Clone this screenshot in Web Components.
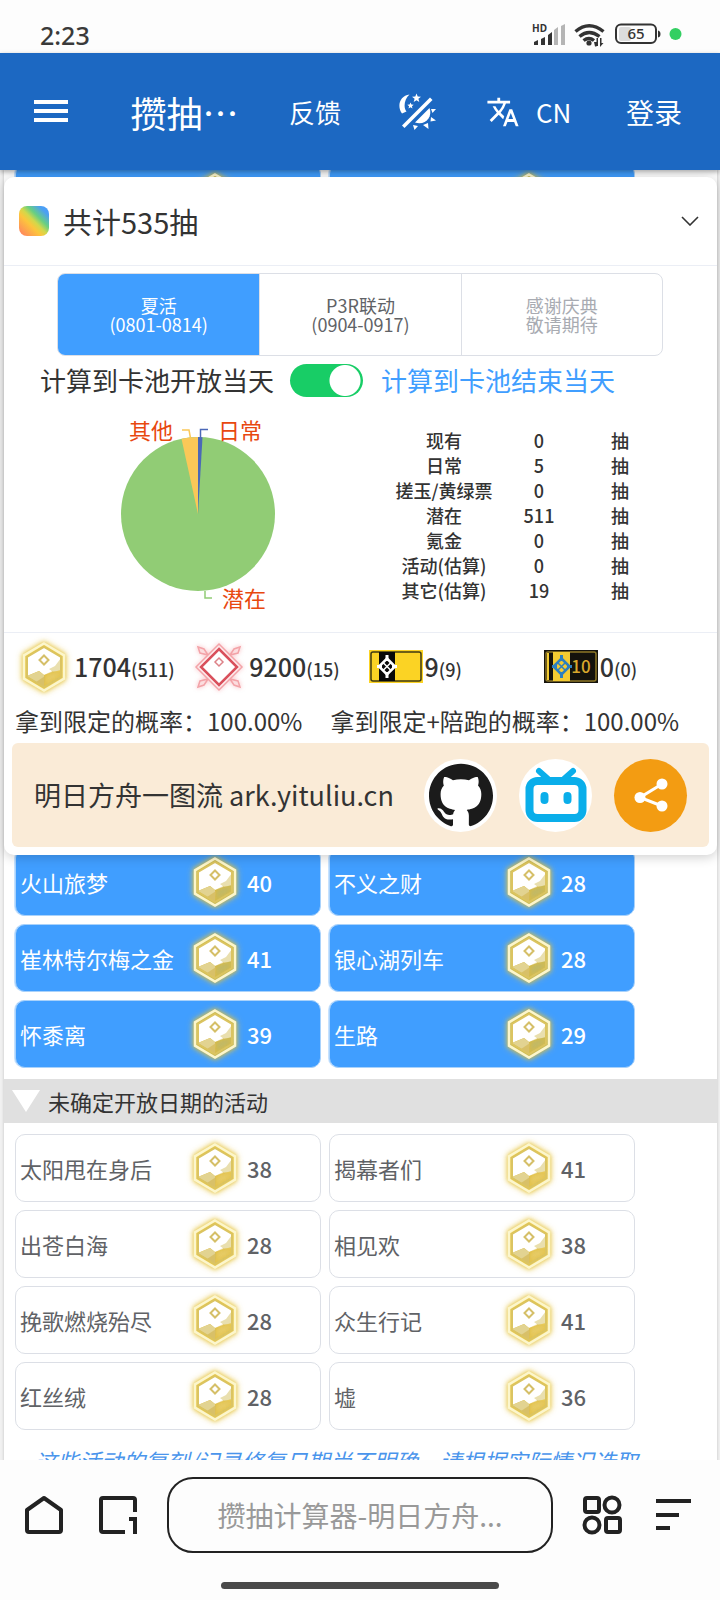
<!DOCTYPE html>
<html lang="zh-CN">
<head>
<meta charset="UTF-8">
<meta name="viewport" content="width=device-width, initial-scale=1">
<title>攒抽计算器</title>
<style>
    :root {
        --primary: #409eff;
        --app-bar: #1c68c2;
        --text: #333;
        --muted: #606266;
        --border: #dcdfe6;
    }
    body {
        margin: 0;
        height: 100vh;
        display: flex;
        flex-direction: column;
        font-family: "Noto Sans CJK SC", "Noto Sans", sans-serif;
        color: var(--text);
        background: #fdfdfd;
    }
    main {
        flex: 1;
        min-height: 0;
        overflow: hidden;
        padding: 0 3px 0 4px;
        background: #f1f1f1;
    }
    .page {
        display: flow-root;
        min-height: 100%;
        background: #fff;
        box-shadow: 0 0 3px rgba(0, 0, 0, 0.2);
    }
    /* rows scrolled below the app bar and the summary panel */
    .scrolled { margin-top: -17px; height: 24px; overflow: hidden; }
    .below { margin-top: -18px; }
    .note {
        margin: 3px 0 0 31px;
        font-size: 22px;
        line-height: 32px;
        font-style: italic;
        color: #4a95ec;
        white-space: nowrap;
    }
</style>
</head>
<body>
<status-bar></status-bar>
<app-bar></app-bar>
<main>
    <div class="page">
        <event-grid class="scrolled" aria-hidden="true">
            <event-card checked></event-card>
            <event-card checked></event-card>
        </event-grid>
        <summary-panel></summary-panel>
        <event-grid class="below">
            <event-card checked count="40">火山旅梦</event-card>
            <event-card checked count="28">不义之财</event-card>
            <event-card checked count="41">崔林特尔梅之金</event-card>
            <event-card checked count="28">银心湖列车</event-card>
            <event-card checked count="39">怀黍离</event-card>
            <event-card checked count="29">生路</event-card>
        </event-grid>
        <section-title>未确定开放日期的活动</section-title>
        <event-grid>
            <event-card count="38">太阳甩在身后</event-card>
            <event-card count="41">揭幕者们</event-card>
            <event-card count="28">出苍白海</event-card>
            <event-card count="38">相见欢</event-card>
            <event-card count="28">挽歌燃烧殆尽</event-card>
            <event-card count="41">众生行记</event-card>
            <event-card count="28">红丝绒</event-card>
            <event-card count="36">墟</event-card>
        </event-grid>
        <p class="note">这些活动的复刻/记录修复日期尚不明确，请根据实际情况选取</p>
    </div>
</main>
<browser-nav></browser-nav>

<script>
const buttonReset = `
    button {
        font: inherit;
        color: inherit;
        background: none;
        border: none;
        padding: 0;
        margin: 0;
        cursor: pointer;
    }
    svg { display: block; }
`;

class BaseElement extends HTMLElement {
    constructor() {
        super();
        this.attachShadow({ mode: 'open' });
    }

    connectedCallback() {
        this.shadowRoot.innerHTML = `<style>${buttonReset}${this.styles()}</style>${this.markup()}`;
    }
}

class StatusBar extends BaseElement {
    styles() {
        return `
            :host {
                display: flex;
                align-items: center;
                justify-content: space-between;
                height: 53px;
                padding: 16px 38px 0 40px;
                box-sizing: border-box;
                background: #fdfdfd;
                color: #3a3a3a;
            }
            time { font: 500 25px/34px "Noto Sans", sans-serif; }
            text { font-family: "Noto Sans", sans-serif; }
        `;
    }

    markup() {
        return `
            <time>2:23</time>
            <svg width="150" height="34" viewBox="0 -5 150 34" fill="#333">
                <text x="0" y="9" font-size="10" font-weight="700">HD</text>
                <path d="M2 19l4-2v5H2zM9 16l4-2v8H9zM16 12l4-3v13h-4z"/>
                <path fill="#b5b5b5" d="M22 7l4-3v18h-4zM29 3l4-2v21h-4z"/>
                <g fill="none" stroke="#333" stroke-width="3.4">
                    <path d="M43.500 8.500Q57 -3 71.500 8.500M47.500 13.500Q57 5.500 67.500 13.500M51.500 17.500Q57 13.500 62 17.500"/>
                </g>
                <circle cx="57" cy="20" r="2.600"/>
                <path d="M62 19h2.500v4.500H63zM66 15v8h-1.500v-8zM68 15h1.500v5h2L68 24z"/>
                <rect x="87" y="4" width="12" height="14" rx="2" fill="#dcdcdc"/>
                <rect x="84" y="1.500" width="40" height="18.500" rx="5" fill="none" stroke="#333" stroke-width="2"/>
                <path d="M126 7.500q2.500 .5 2.500 3.500t-2.500 3.500z"/>
                <text x="104" y="16" font-size="15" font-weight="500" text-anchor="middle">65</text>
                <circle cx="143.500" cy="11" r="6" fill="#33cf62"/>
            </svg>
        `;
    }
}

class AppBar extends BaseElement {
    styles() {
        return `
            :host {
                display: flex;
                align-items: center;
                justify-content: space-between;
                height: 117px;
                padding: 0 38px 0 34px;
                box-sizing: border-box;
                background: var(--app-bar);
                color: #fff;
                position: relative;
                z-index: 2;
                box-shadow: 0 2px 5px rgba(0, 0, 0, 0.35);
            }
            h1 { margin: 0; font-size: 36px; font-weight: 400; line-height: 48px; }
            .menu { padding-right: 12px; }
            .link { font-size: 26px; line-height: 36px; }
            .login { font-size: 28px; line-height: 36px; }
            .theme { padding-left: 6px; }
            .lang { display: flex; align-items: center; gap: 16px; padding-right: 4px; }
        `;
    }

    markup() {
        return `
            <button class="menu" aria-label="菜单">
                <svg width="34" height="24" viewBox="0 0 34 24" fill="#fff">
                    <path d="M0 0h34v4H0zM0 9h34v4H0zM0 18h34v4H0z"/>
                </svg>
            </button>
            <h1>攒抽…</h1>
            <button class="link">反馈</button>
            <button class="theme" aria-label="主题">
                <svg width="38" height="38" viewBox="0 0 38 38" fill="#fff">
                    <path d="M11.500 1.500C2 2.500-1.500 13 4 20.500L8.500 18.500C5 14 6.500 6 11.500 1.500z"/>
                    <path d="M18.500 .5l1.200 3 3.300.2-2.600 2 .9 3.300-2.800-1.800-2.800 1.800.9-3.300-2.600-2 3.300-.2zM12.500 9.500l.9 2.100 2.300.2-1.800 1.500.6 2.200-2-1.200-2 1.200.6-2.200-1.800-1.500 2.300-.2z"/>
                    <path d="M32 4.500l2.500 2.500L6.500 35 4 32.500z"/>
                    <path d="M17 29.500L31.500 15C35 24 27 33 17 29.500z"/>
                    <path d="M33 16l5 0-3.500 4zM33 24l5 3.500-5.500 1zM25 32l5-2 .5 6zM15 32l5 1-3.500 4z"/>
                </svg>
            </button>
            <button class="link lang">
                <svg width="34" height="34" viewBox="0 0 24 24" fill="#fff">
                    <path d="M12.870 15.070l-2.540-2.510.03-.03A17.520 17.520 0 0 0 14.070 6H17V4h-7V2H8v2H1v2h11.170C11.500 7.920 10.440 9.750 9 11.350 8.070 10.320 7.300 9.190 6.690 8h-2c.73 1.630 1.730 3.170 2.980 4.560l-5.090 5.020L4 19l5-5 3.110 3.110.76-2.040zM18.500 10h-2L12 22h2l1.120-3h4.750L21 22h2l-4.500-12zm-2.620 7l1.620-4.330L19.120 17h-3.240z"/>
                </svg>
                CN
            </button>
            <button class="login">登录</button>
        `;
    }
}

// Gold hexagon; the lower facets let the card colour through
class HexCoin extends BaseElement {
    styles() {
        return `
            :host { display: block; width: 56px; height: 60px; }
            svg { filter: drop-shadow(0 0 2px rgba(226, 190, 50, 0.9)) drop-shadow(0 0 3px rgba(232, 200, 70, 0.7)); overflow: visible; }
        `;
    }

    markup() {
        return `
            <svg width="56" height="60" viewBox="-28 -30 56 60">
                <path d="M0-20L17-10V-3L11 1 8 5 0 8-5 4-17 9V-10z" fill="#fff"/>
                <path d="M17-9V3L9 5 5 2 11-1z" fill="#e9dfae"/>
                <path d="M-17 9L-5 4 0 8V20z" fill="#e2d391"/>
                <path d="M-8 15L1 9 0 20z" fill="#d8c068"/>
                <path d="M0 8L8 4 17 5V10L0 20z" fill="#dcbc48" fill-opacity=".4"/>
                <path d="M0-20L17-10V10L0 20-17 10V-10z" fill="none" stroke="#dbc461" stroke-width="2"/>
                <path d="M0-23.500L20-11.700V11.700L0 23.500-20 11.700V-11.700z" fill="none" stroke="#fcf6cc" stroke-width="2.500"/>
                <path d="M0-11.500L4.500-7 0-2.500-4.500-7z" fill="#fff" stroke="#d5bf68" stroke-width="2"/>
            </svg>
        `;
    }
}

class EventGrid extends BaseElement {
    styles() {
        return `
            :host {
                display: grid;
                grid-template-columns: repeat(auto-fill, 306px);
                gap: 8px;
                padding: 11px 0 11px 11px;
                box-sizing: border-box;
            }
        `;
    }

    markup() {
        return '<slot></slot>';
    }
}

class EventCard extends BaseElement {
    styles() {
        return `
            :host { display: block; }
            label {
                display: grid;
                grid-template-columns: 1fr 56px 73px;
                column-gap: 4px;
                align-items: center;
                height: 68px;
                padding-left: 4px;
                box-sizing: border-box;
                border: 1px solid var(--border);
                border-radius: 10px;
                background: #fff;
                color: var(--muted);
                font-size: 22px;
                line-height: 32px;
                cursor: pointer;
            }
            label:has(:checked) {
                color: #fff;
                background: var(--primary);
                border-color: #a9d2fb;
                box-shadow: -1px 0 0 #c6e2ff;
            }
            input { appearance: none; width: 0; height: 0; margin: 0; position: absolute; }
            .name { white-space: nowrap; }
            b { font-weight: 500; }
        `;
    }

    markup() {
        return `
            <label>
                <input type="checkbox" ${this.hasAttribute('checked') ? 'checked' : ''}>
                <span class="name"><slot></slot></span>
                <hex-coin></hex-coin>
                <b>${this.getAttribute('count') || ''}</b>
            </label>
        `;
    }
}

class SectionTitle extends BaseElement {
    styles() {
        return `
            :host { display: block; }
            button {
                display: flex;
                align-items: center;
                gap: 8px;
                width: 100%;
                height: 44px;
                padding: 0 8px;
                background: #e0e0e0;
                font-size: 22px;
                line-height: 32px;
            }
        `;
    }

    markup() {
        return `
            <button>
                <svg width="28" height="22" viewBox="0 0 28 22"><path d="M0 0h28L14 22z" fill="#fff"/></svg>
                <slot></slot>
            </button>
        `;
    }
}

const drawRows = [
    ['现有', 0], ['日常', 5], ['搓玉/黄绿票', 0], ['潜在', 511],
    ['氪金', 0], ['活动(估算)', 0], ['其它(估算)', 19],
];

class SummaryPanel extends BaseElement {
    styles() {
        return `
            :host {
                display: block;
                position: relative;
                z-index: 1;
                background: #fff;
                border-radius: 10px;
                padding-bottom: 8px;
                box-shadow: 0 2px 12px rgba(0, 0, 0, 0.2);
            }
            header {
                display: flex;
                align-items: center;
                gap: 14px;
                height: 88px;
                padding: 0 18px 0 15px;
                border-bottom: 1px solid #ebeef5;
            }
            .mark {
                width: 30px;
                height: 30px;
                border-radius: 8px;
                background: linear-gradient(45deg, #ff8a5c 8%, #fcc63c 38%, #d3d84a 50%, #68cf82 64%, #4b9ff5 84%);
            }
            h2 { flex: 1; margin: 0; font-size: 29px; font-weight: 400; line-height: 40px; }
            .pools {
                display: grid;
                grid-template-columns: repeat(3, 1fr);
                margin: 7px 54px 0 53px;
                border: 1px solid var(--border);
                border-radius: 8px;
                overflow: hidden;
            }
            .pools label {
                display: grid;
                place-content: center;
                height: 81px;
                text-align: center;
                font-size: 18px;
                line-height: 19px;
                color: var(--muted);
                border-left: 1px solid var(--border);
            }
            .pools label:first-child { border-left: none; }
            .pools label:has(:checked) { background: var(--primary); color: #fff; }
            .pools label:has(:disabled) { color: #a8abb2; }
            .pools input { appearance: none; margin: 0; width: 0; height: 0; position: absolute; }
            .until {
                display: flex;
                align-items: center;
                height: 48px;
                padding-left: 36px;
                font-size: 26px;
                line-height: 36px;
                white-space: nowrap;
            }
            .until input {
                appearance: none;
                width: 73px;
                height: 33px;
                margin: 0 18px 0 16px;
                border-radius: 17px;
                background: radial-gradient(circle at 55px 50%, #fff 15px, #18cd66 16px);
            }
            .until .end { color: var(--primary); }
            .stats {
                display: grid;
                grid-template-columns: 370px 1fr;
                height: 228px;
                border-bottom: 1px solid #ebeef5;
            }
            .stats text { font-size: 22px; fill: #e8480f; }
            table {
                border-collapse: collapse;
                align-self: start;
                width: 302px;
                margin-top: 24px;
                table-layout: fixed;
                font-size: 18px;
                line-height: 25px;
                font-weight: 500;
                text-align: center;
            }
            th { font-weight: 500; width: 140px; }
            th, td { padding: 0; }
            td:nth-child(2) { width: 50px; }
            .items {
                display: grid;
                grid-template-columns: repeat(4, 1fr);
                align-items: center;
                height: 68px;
                padding-left: 12px;
            }
            .item { display: flex; align-items: center; gap: 2px; font-size: 25px; line-height: 36px; font-weight: 500; }
            .item hex-coin, .item svg { flex: none; }
            .item small { font-size: 18px; }
            .odds { display: flex; gap: 28px; height: 42px; padding-left: 11px; font-size: 24px; line-height: 40px; white-space: nowrap; }
            footer {
                display: flex;
                align-items: center;
                gap: 22px;
                height: 104px;
                margin: 0 8px;
                padding: 0 22px;
                border-radius: 6px;
                background: #faebd7;
                font-size: 27px;
                line-height: 38px;
            }
            footer span { flex: 1; white-space: nowrap; }
            footer button, footer a { display: grid; place-items: center; width: 73px; height: 73px; border-radius: 50%; background: #fff; }
            footer button { background: #f39c12; }
        `;
    }

    markup() {
        const rows = drawRows.map(([name, count]) => `<tr><th scope="row">${name}</th><td>${count}</td><td>抽</td></tr>`).join('');
        return `
            <header>
                <div class="mark"></div>
                <h2>共计535抽</h2>
                <button aria-label="收起">
                    <svg width="18" height="10" viewBox="0 0 18 10"><path d="M1 1l8 8 8-8" fill="none" stroke="#333" stroke-width="1.600"/></svg>
                </button>
            </header>
            <div class="pools" role="radiogroup">
                <label><input type="radio" name="pool" checked>夏活<br>(0801-0814)</label>
                <label><input type="radio" name="pool">P3R联动<br>(0904-0917)</label>
                <label><input type="radio" name="pool" disabled>感谢庆典<br>敬请期待</label>
            </div>
            <div class="until">
                <label for="until">计算到卡池开放当天</label>
                <input id="until" type="checkbox" role="switch" checked>
                <label for="until" class="end">计算到卡池结束当天</label>
            </div>
            <div class="stats">
                <svg width="370" height="228" viewBox="0 0 370 228">
                    <circle cx="194" cy="110" r="77" fill="#91cc75"/>
                    <path d="M194 110L177.500 34.800A77 77 0 0 1 194 33z" fill="#fac858"/>
                    <path d="M194 110V33A77 77 0 0 1 198.500 33.200z" fill="#4b68b8"/>
                    <g fill="none" stroke-width="1.500">
                        <path d="M178 26h7l1.500 8" stroke="#fac858"/>
                        <path d="M204 25.500h-7.500V34" stroke="#4b68b8"/>
                        <path d="M201 187v7h7" stroke="#91cc75"/>
                    </g>
                    <text x="125" y="35">其他</text>
                    <text x="214" y="35">日常</text>
                    <text x="218" y="203">潜在</text>
                </svg>
                <table><tbody>${rows}</tbody></table>
            </div>
            <div class="items">
                <div class="item"><hex-coin></hex-coin><span>1704<small>(511)</small></span></div>
                <div class="item">
                    <svg width="56" height="56" viewBox="-28 -28 56 56" fill="none" stroke="#f3a3a8" stroke-width="1.500">
                        <g style="filter: drop-shadow(0 0 2px rgba(240, 90, 100, 0.5))">
                            <path d="M0-23L23 0 0 23-23 0z"/>
                            <path d="M-11-12l-8-2-2-6 6 2 4 6M11-12l8-2 2-6-6 2-4 6M-11 12l-8 2-2 6 6-2 4-6M11 12l8 2 2 6-6-2-4-6"/>
                        </g>
                        <path d="M0-18L18 0 0 18-18 0z" fill="#fff" stroke="#d9505c" stroke-width="2.500"/>
                        <path d="M0-9l4 4-4 4-4-4z" stroke="#dd8288"/>
                    </svg>
                    <span>9200<small>(15)</small></span>
                </div>
                <div class="item">
                    <svg width="56" height="34" viewBox="0 0 56 34">
                        <path d="M2 0h54v33H2z" fill="#fbd324"/>
                        <rect x="4" y="2" width="50" height="29" rx="2" fill="none" stroke="#3f3a12" stroke-width="1.500"/>
                        <path d="M12 2h16v29H12z" fill="#080808"/>
                        <g stroke="#fff" fill="none">
                            <path d="M20 8.500l8 8-8 8-8-8z" stroke-width="2.500"/>
                            <path d="M20 5v6M20 22v6M10 16.500h5M25 16.500h5" stroke-width="3"/>
                            <path d="M16 12.500l8 8M24 12.500l-8 8" stroke-width="1.500"/>
                        </g>
                    </svg>
                    <span>9<small>(9)</small></span>
                </div>
                <div class="item">
                    <svg width="56" height="34" viewBox="0 0 56 34">
                        <path d="M2 0h54v33H2z" fill="#14120c"/>
                        <rect x="4" y="2" width="50" height="29" rx="2" fill="none" stroke="#8d7726" stroke-width="1.500"/>
                        <path d="M11 2h17v29H11zM5 3h2v27H5z" fill="#f3cb32"/>
                        <g stroke="#2b7fc0" fill="none">
                            <path d="M19.500 8.500l8 8-8 8-8-8z" stroke-width="2.500"/>
                            <path d="M19.500 5v6M19.500 22v6M10 16.500h5M25 16.500h5" stroke-width="3"/>
                            <path d="M15.500 12.500l8 8M23.500 12.500l-8 8" stroke-width="1.500"/>
                        </g>
                        <text x="39" y="23" font-size="17" text-anchor="middle" fill="#d9a82c">10</text>
                    </svg>
                    <span>0<small>(0)</small></span>
                </div>
            </div>
            <div class="odds"><span>拿到限定的概率：100.00%</span><span>拿到限定+陪跑的概率：100.00%</span></div>
            <footer>
                <span>明日方舟一图流 ark.yituliu.cn</span>
                <a href="#github" aria-label="GitHub">
                    <svg width="64" height="64" viewBox="0 0 24 24" fill="#1b1b1b"><path d="M12 .297c-6.630 0-12 5.373-12 12 0 5.303 3.438 9.800 8.205 11.385.6.113.82-.258.82-.577 0-.285-.01-1.040-.015-2.040-3.338.724-4.042-1.610-4.042-1.610C4.422 18.070 3.633 17.700 3.633 17.700c-1.087-.744.084-.729.084-.729 1.205.084 1.838 1.236 1.838 1.236 1.070 1.835 2.809 1.305 3.495.998.108-.776.417-1.305.76-1.605-2.665-.3-5.466-1.332-5.466-5.930 0-1.310.465-2.380 1.235-3.220-.135-.303-.54-1.523.105-3.176 0 0 1.005-.322 3.300 1.230.96-.267 1.980-.399 3-.405 1.020.006 2.040.138 3 .405 2.280-1.552 3.285-1.230 3.285-1.230.645 1.653.24 2.873.12 3.176.765.84 1.230 1.910 1.230 3.220 0 4.610-2.805 5.625-5.475 5.920.42.36.81 1.096.81 2.220 0 1.606-.015 2.896-.015 3.286 0 .315.21.69.825.57C20.565 22.092 24 17.592 24 12.297c0-6.627-5.373-12-12-12"/></svg>
                </a>
                <a href="#bilibili" aria-label="bilibili">
                    <svg width="62" height="58" viewBox="0 0 62 58" fill="none" stroke="#0aaeea" stroke-linecap="round">
                        <rect x="4.500" y="15" width="53" height="37" rx="8" stroke-width="8"/>
                        <path d="M14 5l9 8M48 5l-9 8" stroke-width="6"/>
                        <path d="M19.500 30v4M42.500 30v4" stroke-width="8"/>
                    </svg>
                </a>
                <button aria-label="分享">
                    <svg width="34" height="34" viewBox="0 0 34 34" fill="#fff">
                        <path d="M28 6L6 19.500 28 28" fill="none" stroke="#fff" stroke-width="3"/>
                        <circle cx="28" cy="6" r="5.500"/><circle cx="6" cy="19.500" r="5.500"/><circle cx="28" cy="28" r="5.500"/>
                    </svg>
                </button>
            </footer>
        `;
    }
}

class BrowserNav extends BaseElement {
    styles() {
        return `
            :host {
                display: grid;
                grid-template-rows: 110px 1fr;
                justify-items: center;
                height: 140px;
                background: #fdfdfd;
                position: relative;
            }
            nav {
                display: flex;
                align-items: center;
                gap: 34px;
                width: 100%;
                box-sizing: border-box;
                padding: 0 28px 0 24px;
            }
            .address {
                flex: 1;
                min-width: 0;
                height: 76px;
                margin: 0 -5px;
                border: 2px solid #222;
                border-radius: 26px;
                color: #999;
                font-size: 28px;
                line-height: 40px;
            }
            .handle { width: 278px; height: 7px; margin-top: 12px; border-radius: 4px; background: #4a4a4a; }
        `;
    }

    markup() {
        return `
            <nav>
                <button aria-label="主页">
                    <svg width="40" height="40" viewBox="0 0 40 40" fill="none" stroke="#222" stroke-width="4" stroke-linejoin="round"><path d="M3 15L20 3l17 12v20q0 2-2 2H5q-2 0-2-2z"/></svg>
                </button>
                <button aria-label="标签页">
                    <svg width="40" height="40" viewBox="0 0 40 40" fill="none" stroke="#222" stroke-width="4"><path d="M37 17V5q0-2-2-2H5Q3 3 3 5v30q0 2 2 2h22M31 24h6v15"/></svg>
                </button>
                <button class="address">攒抽计算器-明日方舟...</button>
                <button aria-label="应用">
                    <svg width="40" height="40" viewBox="0 0 40 40" fill="none" stroke="#222" stroke-width="4">
                        <rect x="3" y="3" width="14" height="14" rx="2"/><circle cx="30" cy="10" r="7.500"/>
                        <circle cx="10" cy="30" r="7.500"/><rect x="24" y="23" width="14" height="14" rx="2"/>
                    </svg>
                </button>
                <button aria-label="更多">
                    <svg width="36" height="32" viewBox="0 0 36 32" fill="#222"><path d="M0 0h35v4H0zM0 14h23v4H0zM0 27h14v4H0z"/></svg>
                </button>
            </nav>
            <div class="handle"></div>
        `;
    }
}

customElements.define('status-bar', StatusBar);
customElements.define('app-bar', AppBar);
customElements.define('hex-coin', HexCoin);
customElements.define('event-grid', EventGrid);
customElements.define('event-card', EventCard);
customElements.define('section-title', SectionTitle);
customElements.define('summary-panel', SummaryPanel);
customElements.define('browser-nav', BrowserNav);
</script>
</body>
</html>
